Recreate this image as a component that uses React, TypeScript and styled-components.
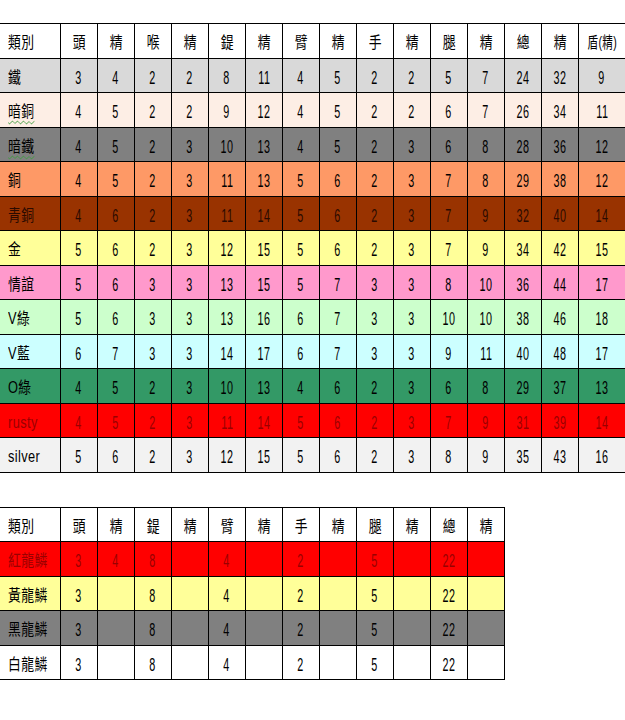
import React from "react";
import styled, { createGlobalStyle } from "styled-components";

const GlobalStyle = createGlobalStyle`
  html, body {
    margin: 0;
    padding: 0;
    background: #ffffff;
    overflow: hidden;
  }
`;

const Page = styled.div`
  width: 625px;
  height: 720px;
  overflow: hidden;
  padding-top: 23px;
  box-sizing: border-box;
  display: flex;
  flex-direction: column;
  align-items: flex-start;
  gap: 34px;
`;

const Sheet = styled.table`
  border-collapse: collapse;
  table-layout: fixed;
  width: max-content;
  flex-shrink: 0;
  color: #000;
  margin-left: -1px;
`;

const Row = styled.tr<{ $bg: string; $ink?: string }>`
  background: ${({ $bg }) => $bg};
  color: ${({ $ink }) => $ink || "#000"};
  height: 34.5px;
`;

const Cell = styled.td<{ $w?: number }>`
  width: ${({ $w }) => $w || 36}px;
  min-width: ${({ $w }) => $w || 36}px;
  max-width: ${({ $w }) => $w || 36}px;
  border: 1px solid #000;
  padding: 5px 0 0;
  text-align: center;
  vertical-align: middle;
  white-space: nowrap;
  overflow: hidden;
  line-height: 1;
`;

const NameCell = styled(Cell)`
  text-align: left;
  padding-left: 8px;
`;

const Label = styled.span<{ $left?: boolean; $squiggle?: boolean; $tight?: boolean }>`
  display: inline-block;
  font-family: "Liberation Sans", "Noto Sans CJK TC", sans-serif;
  font-size: 16px;
  transform: scaleX(${({ $tight }) => ($tight ? 0.66 : 0.8)});
  transform-origin: ${({ $left }) => ($left ? "left center" : "center")};
  text-decoration: ${({ $squiggle }) => ($squiggle ? "underline wavy #3c9a3c" : "none")};
  text-decoration-thickness: 1px;
  text-underline-offset: 3px;
  letter-spacing: 0.5px;
`;

const Num = styled.span`
  display: inline-block;
  font-family: "Liberation Sans", sans-serif;
  font-size: 18px;
  transform: scaleX(0.6);
  letter-spacing: 1px;
`;

type RowData = {
  name: string;
  bg: string;
  ink?: string;
  squiggle?: boolean;
  values: (number | null)[];
};

const armourHead = ["頭", "精", "喉", "精", "鍉", "精", "臂", "精", "手", "精", "腿", "精", "總", "精", "盾(精)"];

const armourRows: RowData[] = [
  { name: "鐵", bg: "#d9d9d9", values: [3, 4, 2, 2, 8, 11, 4, 5, 2, 2, 5, 7, 24, 32, 9] },
  { name: "暗銅", bg: "#fdeee5", squiggle: true, values: [4, 5, 2, 2, 9, 12, 4, 5, 2, 2, 6, 7, 26, 34, 11] },
  { name: "暗鐵", bg: "#808080", squiggle: true, values: [4, 5, 2, 3, 10, 13, 4, 5, 2, 3, 6, 8, 28, 36, 12] },
  { name: "銅", bg: "#fe9966", values: [4, 5, 2, 3, 11, 13, 5, 6, 2, 3, 7, 8, 29, 38, 12] },
  { name: "青銅", bg: "#993300", ink: "#2a0a00", values: [4, 6, 2, 3, 11, 14, 5, 6, 2, 3, 7, 9, 32, 40, 14] },
  { name: "金", bg: "#ffff99", values: [5, 6, 2, 3, 12, 15, 5, 6, 2, 3, 7, 9, 34, 42, 15] },
  { name: "情誼", bg: "#ff99cc", values: [5, 6, 3, 3, 13, 15, 5, 7, 3, 3, 8, 10, 36, 44, 17] },
  { name: "V綠", bg: "#ccffcc", values: [5, 6, 3, 3, 13, 16, 6, 7, 3, 3, 10, 10, 38, 46, 18] },
  { name: "V藍", bg: "#ccffff", values: [6, 7, 3, 3, 14, 17, 6, 7, 3, 3, 9, 11, 40, 48, 17] },
  { name: "O綠", bg: "#339966", values: [4, 5, 2, 3, 10, 13, 4, 6, 2, 3, 6, 8, 29, 37, 13] },
  { name: "rusty", bg: "#ff0000", ink: "#990000", values: [4, 5, 2, 3, 11, 14, 5, 6, 2, 3, 7, 9, 31, 39, 14] },
  { name: "silver", bg: "#f2f2f2", values: [5, 6, 2, 3, 12, 15, 5, 6, 2, 3, 8, 9, 35, 43, 16] },
];

const scaleHead = ["頭", "精", "鍉", "精", "臂", "精", "手", "精", "腿", "精", "總", "精"];
const scaleValues = [3, null, 8, null, 4, null, 2, null, 5, null, 22, null];

const scaleRows: RowData[] = [
  { name: "紅龍鱗", bg: "#ff0000", ink: "#990000", values: [3, 4, 8, null, 4, null, 2, null, 5, null, 22, null] },
  { name: "黃龍鱗", bg: "#ffff99", values: scaleValues },
  { name: "黑龍鱗", bg: "#808080", values: scaleValues },
  { name: "白龍鱗", bg: "#ffffff", values: scaleValues },
];

function Grid({ head, rows, lastWidth }: { head: string[]; rows: RowData[]; lastWidth?: number }) {
  const widthOf = (i: number, n: number) => (i === n - 1 && lastWidth ? lastWidth : 36);
  return (
    <Sheet>
      <tbody>
        <Row $bg="#ffffff">
          <NameCell $w={52}>
            <Label $left>類別</Label>
          </NameCell>
          {head.map((h, i) => (
            <Cell key={i} $w={widthOf(i, head.length)}>
              <Label $tight={h.length > 1}>{h}</Label>
            </Cell>
          ))}
        </Row>
        {rows.map((r) => (
          <Row key={r.name} $bg={r.bg} $ink={r.ink}>
            <NameCell $w={52}>
              <Label $left $squiggle={r.squiggle}>
                {r.name}
              </Label>
            </NameCell>
            {r.values.map((v, i) => (
              <Cell key={i} $w={widthOf(i, r.values.length)}>
                <Num>{v ?? ""}</Num>
              </Cell>
            ))}
          </Row>
        ))}
      </tbody>
    </Sheet>
  );
}

export default function App() {
  return (
    <>
      <GlobalStyle />
      <Page>
        <Grid head={armourHead} rows={armourRows} lastWidth={46} />
        <Grid head={scaleHead} rows={scaleRows} />
      </Page>
    </>
  );
}
